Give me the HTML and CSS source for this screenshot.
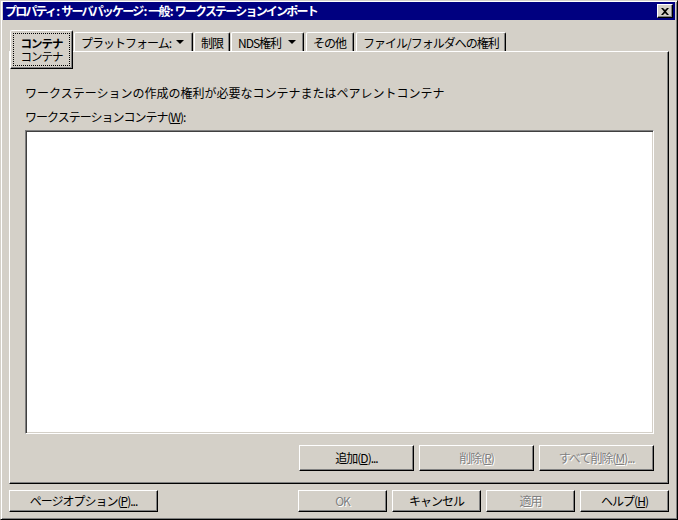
FILE: index.html
```html
<!DOCTYPE html>
<html lang="ja">
<head>
  <meta charset="UTF-8" />
  <title>プロパティ</title>
  <link rel="stylesheet" href="styles.css">
</head>
<body>
  <div class="window">
    <div class="titlebar">
      <span class="title">プロパティ<span class="title-colon">:</span>サーバパッケージ<span class="title-colon">:</span>一般<span class="title-colon">:</span>ワークステーションインポート</span>
      <div class="close-btn">
        <svg width="8" height="7" viewBox="0 0 8 7">
          <path d="M0 0h2l2 2 2-2h2L5 3.5 8 7H6L4 5 2 7H0l3-3.5z" fill="#000"/>
        </svg>
      </div>
    </div>

    <div class="main">
      <div class="tabs">
        <div class="tab tab-active">
          <div class="focus">
            <b>コンテナ</b>
            <span>コンテナ</span>
          </div>
        </div>
        <div class="tab tab-platform">プラットフォーム: <i class="arrow"></i></div>
        <div class="tab tab-limit">制限</div>
        <div class="tab tab-nds">NDS権利 <i class="arrow"></i></div>
        <div class="tab tab-other">その他</div>
        <div class="tab tab-files">ファイル/フォルダへの権利</div>
      </div>

      <div class="panel">
        <p class="desc">ワークステーションの作成の権利が必要なコンテナまたはペアレントコンテナ</p>
        <p class="label">ワークステーションコンテナ(<u>W</u>):</p>
        <div class="listbox"></div>
        <div class="list-buttons">
          <button class="btn btn-wide">追加(<u>D</u>)...</button>
          <button class="btn btn-wide" disabled>削除(<u>R</u>)</button>
          <button class="btn btn-wide" disabled>すべて削除(<u>M</u>)...</button>
        </div>
      </div>

      <div class="footer">
        <button class="btn btn-page">ページオプション(<u>P</u>)...</button>
        <div class="footer-right">
          <button class="btn btn-small" disabled>OK</button>
          <button class="btn btn-small">キャンセル</button>
          <button class="btn btn-small" disabled>適用</button>
          <button class="btn btn-small">ヘルプ(<u>H</u>)</button>
        </div>
      </div>
    </div>
  </div>
</body>
</html>
```

FILE: styles.css
```css
* {
  box-sizing: border-box;
}

body {
  margin: 0;
  background: #d4d0c8;
  font-family: "Noto Sans CJK JP", "Liberation Sans", sans-serif;
  font-size: 12px;
  letter-spacing: -1px;
  color: #000;
}

.window {
  width: 678px;
  height: 520px;
  background: #d4d0c8;
  border: 1px solid;
  border-color: #d4d0c8 #000 #000 #d4d0c8;
  box-shadow: inset 1px 1px #fff, inset -1px -1px #808080;
  padding: 1px 2px 0 2px;
}

.titlebar {
  height: 18px;
  background: #000080;
  color: #fff;
  display: flex;
  align-items: center;
  justify-content: space-between;
  padding: 0 2px 0 2px;
}

.title {
  font-weight: bold;
  line-height: 18px;
  letter-spacing: -1.8px;
}

.title-colon {
  letter-spacing: 0;
  margin: 0 1px;
}

.close-btn {
  width: 16px;
  height: 14px;
  background: #d4d0c8;
  border: 1px solid;
  border-color: #fff #000 #000 #fff;
  box-shadow: inset -1px -1px #808080;
  display: flex;
  align-items: center;
  justify-content: center;
}

.main {
  padding: 10px 6px 0 6px;
}

/* tabs */
.tabs {
  display: flex;
  align-items: flex-start;
  height: 39px;
  margin-bottom: -18px;
}

.tab {
  display: flex;
  align-items: center;
  flex-shrink: 0;
  height: 19px;
  margin-top: 2px;
  margin-left: 1px;
  padding: 0 6px;
  white-space: nowrap;
  border-top: 1px solid #fff;
  border-left: 1px solid #fff;
  border-right: 1px solid #000;
  box-shadow: inset -1px 0 #808080;
  border-radius: 2px 2px 0 0;
  background: #d4d0c8;
}

.tab-active {
  position: relative;
  z-index: 1;
  width: 63px;
  height: 39px;
  margin-top: 0;
  padding: 2px;
  border-bottom: 1px solid #000;
  box-shadow: inset -1px -1px #808080;
}

.focus {
  width: 100%;
  height: 100%;
  border: 1px dotted #000;
  display: flex;
  flex-direction: column;
  align-items: center;
  justify-content: center;
  font-size: 11.5px;
  line-height: 13px;
}

.tab-platform { width: 119px; }
.tab-limit { width: 36px; }
.tab-nds { width: 73px; }
.tab-other { width: 48px; margin-left: 2px; }
.tab-files { width: 150px; margin-left: 2px; }

.arrow {
  width: 0;
  height: 0;
  margin-left: auto;
  margin-right: 1px;
  border-left: 4px solid transparent;
  border-right: 4px solid transparent;
  border-top: 4px solid #000;
}

.tab-platform .arrow {
  margin-right: 2px;
}

/* panel */
.panel {
  height: 433px;
  border: 1px solid;
  border-color: #fff #000 #000 #fff;
  box-shadow: inset -1px -1px #808080;
  padding: 34px 14px 0 15px;
}

.desc, .label {
  margin: 0;
  line-height: 14px;
}

.desc {
  letter-spacing: 0;
}

.label {
  margin-top: 10px;
}

.listbox {
  margin-top: 6px;
  height: 304px;
  background: #fff;
  border: 1px solid;
  border-color: #808080 #fff #fff #808080;
  box-shadow: inset 1px 1px #404040, inset -1px -1px #d4d0c8;
}

.list-buttons {
  display: flex;
  justify-content: flex-end;
  gap: 5px;
  margin-top: 11px;
}

/* buttons */
.btn {
  font-family: inherit;
  font-size: 12px;
  letter-spacing: -1px;
  color: #000;
  background: #d4d0c8;
  border: 1px solid;
  border-color: #fff #000 #000 #fff;
  box-shadow: inset -1px -1px #808080;
  padding: 0;
  line-height: 14px;
}

.btn:disabled {
  color: #808080;
  text-shadow: 1px 1px #fff;
}

.btn-wide {
  width: 115px;
  height: 26px;
}

.footer {
  display: flex;
  justify-content: space-between;
  margin-top: 6px;
}

.footer-right {
  display: flex;
  gap: 5px;
}

.btn-page {
  width: 149px;
  height: 22px;
}

.btn-small {
  width: 89px;
  height: 22px;
}
```
